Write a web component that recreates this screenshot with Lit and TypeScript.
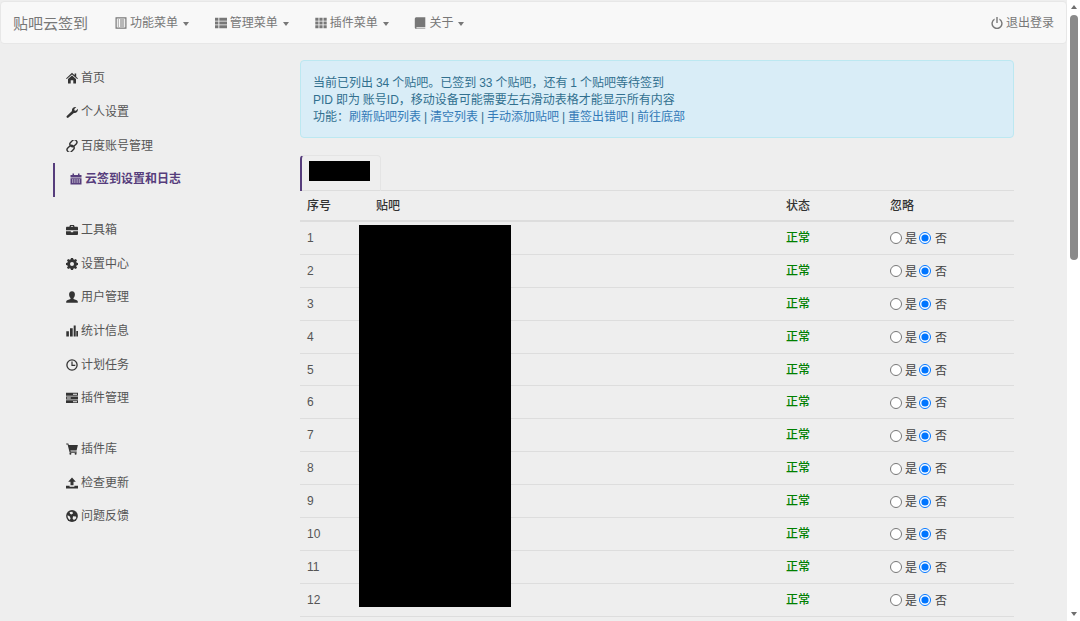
import { LitElement, html, css, svg } from "lit";
import { customElement } from "lit/decorators.js";

const ICONS: Record<string, unknown> = {
  home: svg`<path d="M6 .8 8.6 3.200V1.600h1.600v3.100L12 6.400l-.8.700L6 2.600.8 7.100 0 6.400z"/><path d="M6 3.600l4 3.500v4.300H7.300V8.200H4.700v3.200H2V7.100z"/>`,
  wrench: svg`<path d="M.8 10.100 6 4.900C5.500 2.800 7.400.4 10.300 1L8.300 3l.2 1.400 1.400.3 1.900-2c.6 2.900-1.700 4.900-3.900 4.300L2.500 11.600c-.5.4-1.200.4-1.600 0-.5-.4-.5-1.100-.1-1.500z"/>`,
  link: svg`<g fill="none" stroke="currentColor" stroke-width="1.400"><rect x="4.900" y="-.6" width="5" height="7.600" rx="2.300" transform="rotate(45 7.400 3.200)"/><rect x="2.100" y="5" width="5" height="7.600" rx="2.300" transform="rotate(45 4.600 8.800)"/></g>`,
  calendar: svg`<path d="M2.500.5h1.500V2H8V.5h1.500V2h2v2.500H.5V2h2zM.5 5.200h11v6.300H.5zM2 6.500v1h1.300v-1zM4.200 6.500v1h1.300v-1zM6.500 6.500v1h1.300v-1zM8.700 6.500v1H10v-1zM2 8.600v1h1.300v-1zM4.200 8.600v1h1.300v-1zM6.500 8.600v1h1.300v-1zM8.700 8.600v1H10v-1z" fill-rule="evenodd"/>`,
  briefcase: svg`<path d="M4 1h4l.6 1.800H11c.5 0 1 .5 1 1v2.400H0V3.800c0-.5.5-1 1-1h2.400zm.8 1.800h2.400L7 1.900H5z" fill-rule="evenodd"/><path d="M0 7.200h4.800v1h2.400v-1H12V10c0 .5-.5 1-1 1H1c-.5 0-1-.5-1-1z"/>`,
  cog: svg`<path fill-rule="evenodd" d="M5 .5h2l.3 1.500 1.100.5 1.300-.9 1.400 1.400-.9 1.300.5 1.100 1.500.3v2l-1.500.3-.5 1.100.9 1.300-1.400 1.400-1.300-.9-1.100.5-.3 1.500H5l-.3-1.500-1.100-.5-1.300.9L.9 10.400l.9-1.300-.5-1.100L-.2 7.700v-2l1.500-.3.5-1.100-.9-1.300L2.300 1.600l1.300.9 1.100-.5zM6 4.700a2 2 0 1 0 0 4 2 2 0 0 0 0-4z" transform="translate(0 -.7)"/>`,
  user: svg`<path d="M6 .3c2 0 3 1.500 2.900 3.400-.1 1.600-.7 2.700-1.400 3.200v1.200c1.600.5 4 1.100 4.300 2.300v1.300H.2v-1.300c.3-1.200 2.700-1.800 4.300-2.300V6.900c-.7-.5-1.300-1.600-1.400-3.200C3 1.800 4 .3 6 .3z"/>`,
  stats: svg`<path d="M.3 6.200h2.600v5.300H.3zM4 3.200h2.700v8.300H4zM7.700.5h2v11h-2zM10.300 6h1.700v5.500h-1.700z"/>`,
  time: svg`<circle cx="6" cy="6" r="5.100" fill="none" stroke="currentColor" stroke-width="1.300"/><path d="M5.400 2.600h1.200v3.200h2.700V7H5.400z"/>`,
  tasks: svg`<path d="M0 .8h12v2.900H0zM0 4.500h12v2.900H0zM0 8.200h12v2.900H0z"/><path d="M7 1.800h4v1H7zM.8 5.500h4v.9h-4zM7 9.200h4v1H7z" fill="#eee"/>`,
  cart: svg`<path d="M.2.400h2.100l.5 1.500h9.100L10.600 7.600H4.400l.3 1h6v1.100H3.700L1.600 1.500H.2z"/><circle cx="4.400" cy="10.800" r="1"/><circle cx="9.600" cy="10.800" r="1"/>`,
  open: svg`<path d="M6 .5l3.800 4.200H7.500v3.600h-3V4.700H2.200z"/><path d="M0 8.800h3.600v.9h4.800v-.9H12v2.700H0z"/>`,
  globe: svg`<circle cx="6" cy="6" r="5.900"/><path d="M3.600 1.900 6.400 1.700l.6 1.800-1.700 1-1.300-.7zM7 6.200l3 .2.300 1.900-2.300 1.800-1.400-1.400zM1.600 5.300l2.300 1.200.7 2.200-.9 1.200C2.300 9 1.300 7.300 1.600 5.300z" fill="#eee"/>`,
  listalt: svg`<path fill-rule="evenodd" d="M.5.300h11v11.400H.5zM1.700 1.500v9h8.600v-9z"/><path d="M2.800 2.600h1.200v1H2.800zM5 2.600h4.200v1H5zM2.800 4.600h1.200v1H2.800zM5 4.600h4.200v1H5zM2.800 6.500h1.200v1H2.800zM5 6.500h4.200v1H5zM2.800 8.400h1.200v1H2.800zM5 8.400h4.200v1H5z"/>`,
  thlist: svg`<path d="M0 .8h3.400v3H0zM4.300.8H12v3H4.300zM0 4.500h3.400v3H0zM4.300 4.500H12v3H4.300zM0 8.200h3.400v3H0zM4.300 8.200H12v3H4.300z"/>`,
  th: svg`<path d="M.3.800h3.200v3H.3zM4.400.8h3.200v3H4.400zM8.500.8h3.200v3H8.500zM.3 4.500h3.200v3H.3zM4.400 4.500h3.200v3H4.400zM8.500 4.500h3.200v3H8.500zM.3 8.200h3.200v3H.3zM4.400 8.200h3.200v3H4.400zM8.500 8.200h3.200v3H8.500z"/>`,
  book: svg`<path d="M2.500.2h8.800v10H3c-.6 0-.8.300-.8.700s.2.700.8.700h8.300v.4H2.500c-.9 0-1.700-.6-1.700-1.500V1.800C.8.900 1.600.2 2.500.2z"/>`,
  off: svg`<path d="M5.300.1h1.400v5.900H5.300z"/><path d="M3.600 1.500v1.600a4.200 4.200 0 1 0 4.800 0V1.500a5.600 5.600 0 1 1-4.800 0z"/>`,
};

const icon = (n: string) => html`<svg class="ic" viewBox="0 0 12 12" fill="currentColor" aria-hidden="true">${ICONS[n]}</svg>`;

const GROUPS: [string, string, boolean?][][] = [
  [["home", "首页"], ["wrench", "个人设置"], ["link", "百度账号管理"], ["calendar", "云签到设置和日志", true]],
  [["briefcase", "工具箱"], ["cog", "设置中心"], ["user", "用户管理"], ["stats", "统计信息"], ["time", "计划任务"], ["tasks", "插件管理"]],
  [["cart", "插件库"], ["open", "检查更新"], ["globe", "问题反馈"]],
];

const MENU: [string, string][] = [["listalt", "功能菜单"], ["thlist", "管理菜单"], ["th", "插件菜单"], ["book", "关于"]];

const LINE1 = "当前已列出 34 个贴吧。已签到 33 个贴吧\uFF0C还有 1 个贴吧等待签到";
const LINE2 = "PID 即为 账号ID\uFF0C移动设备可能需要左右滑动表格才能显示所有内容";
const LABEL = "功能\uFF1A";

@customElement("app-root")
export class AppRoot extends LitElement {
  static styles = css`
    :host {
      display: flex;
      height: 621px;
      overflow: hidden;
      background: #fff;
      font: 12px/17px "Liberation Sans", "Noto Sans CJK SC", sans-serif;
      color: #333;
    }
    .page { width: 1067px; height: 621px; background: #eee; overflow: hidden; flex: none; padding-top: 1px; box-sizing: border-box; }
    .ic { width: 12px; height: 12px; flex: none; }
    .navbar {
      height: 43px;
      box-sizing: border-box;
      display: flex;
      align-items: center;
      background: #f8f8f8;
      border: 1px solid #e7e7e7;
      border-radius: 4px;
      color: #777;
      padding: 2px 12px 0;
    }
    .brand { font-size: 15px; width: 102px; }
    .menu { display: flex; align-items: center; gap: 25.8px; flex: 1; }
    .menu-item, .logout { display: flex; align-items: center; gap: 3px; }
    .menu-item .ic, .logout .ic { margin-top: -2px; }
    .caret {
      width: 0; height: 0; margin-left: 2px; margin-top: 1px;
      border-left: 3.5px solid transparent;
      border-right: 3.5px solid transparent;
      border-top: 4px solid #777;
    }
    .content { display: flex; padding-top: 15px; }
    .side { width: 247px; margin-left: 53px; flex: none; padding-top: 3px; }
    .group { margin-bottom: 17px; }
    .nav-item {
      height: 33.67px;
      display: flex;
      align-items: center;
      gap: 3px;
      padding-left: 13px;
      box-sizing: border-box;
      color: #555;
    }
    .nav-item .ic { color: #333; margin-top: -1px; }
    .nav-item.active {
      border-left: 2px solid #563d7c;
      padding-left: 15px;
      color: #563d7c;
      font-weight: 700;
    }
    .nav-item.active .ic { color: #563d7c; }
    .main { width: 714px; flex: none; position: relative; }
    .alert {
      box-sizing: border-box;
      height: 78px;
      margin-top: 1px;
      padding: 14px 12px 0;
      background: #d9edf7;
      border: 1px solid #bce8f1;
      border-radius: 4px;
      color: #31708f;
      word-spacing: -0.4px;
    }
    .alert .l { color: #337ab7; }
    .tabs { margin-top: 17px; height: 36px; box-sizing: border-box; border-bottom: 1px solid #ddd; display: flex; }
    .tab {
      width: 81px; height: 36px; box-sizing: border-box;
      border: 1px solid #e4e4e4;
      border-left: 2px solid #563d7c;
      border-bottom: none;
      border-radius: 4px 4px 0 0;
      padding: 5px 0 0 7px;
    }
    .mask { background: #000; display: block; }
    .tab .mask { width: 61px; height: 20px; }
    .row {
      display: grid;
      grid-template-columns: 69px 410px 104px 1fr;
      height: 32.9px;
      box-sizing: border-box;
      border-bottom: 1px solid #ddd;
      align-items: center;
      padding: 1px 0 0 7px;
    }
    .row.head { height: 31px; border-bottom: 2px solid #ddd; font-weight: 500; padding-top: 2px; }
    .num { color: #555; }
    .ok { color: #008000; font-weight: 500; }
    .radios { display: flex; align-items: center; color: #444; }
    .radios input { margin: 0 3px 0 0; width: 12px; height: 12px; }
    .radios label { display: flex; align-items: center; margin-right: 2px; }
    .radios label + label input { margin-right: 4px; }
    .radios label span { padding-top: 2px; }
    .cover { position: absolute; left: 59px; top: 166px; width: 152px; height: 382px; background: #000; }
    .scrollbar {
      flex: 1;
      background: #fff;
      position: relative;
      display: flex;
      flex-direction: column;
      align-items: center;
      justify-content: space-between;
      padding: 5px 0;
    }
    .arrow-up { width: 0; height: 0; border: 3.5px solid transparent; border-top: 0; border-bottom: 4px solid #6e6e6e; }
    .arrow-down { width: 0; height: 0; border: 3.5px solid transparent; border-bottom: 0; border-top: 4px solid #6e6e6e; }
    .thumb { position: absolute; left: 3px; top: 15px; width: 8px; height: 245px; border-radius: 4px; background: #8a8a8a; }
  `;

  render() {
    const rows = Array.from({ length: 12 }, (_, i) => i + 1);
    return html`
      <div class="page">
        <div class="navbar">
          <div class="brand">贴吧云签到</div>
          <div class="menu">
            ${MENU.map(([i, t]) => html`<div class="menu-item">${icon(i)}<span>${t}</span><span class="caret"></span></div>`)}
          </div>
          <div class="logout">${icon("off")}<span>退出登录</span></div>
        </div>
        <div class="content">
          <div class="side">
            ${GROUPS.map((g) => html`<div class="group">
              ${g.map(([i, t, a]) => html`<div class="nav-item ${a ? "active" : ""}">${icon(i)}<span>${t}</span></div>`)}
            </div>`)}
          </div>
          <div class="main">
            <div class="alert">
              <div>${LINE1}</div>
              <div>${LINE2}</div>
              <div>${LABEL}<span class="l">刷新贴吧列表</span> | <span class="l">清空列表</span> | <span class="l">手动添加贴吧</span> | <span class="l">重签出错吧</span> | <span class="l">前往底部</span></div>
            </div>
            <div class="tabs"><div class="tab"><span class="mask"></span></div></div>
            <div class="row head"><span>序号</span><span>贴吧</span><span>状态</span><span>忽略</span></div>
            ${rows.map((n) => html`<div class="row">
              <span class="num">${n}</span><span></span><span class="ok">正常</span>
              <span class="radios">
                <label><input type="radio" name="r${n}" /><span>是</span></label>
                <label><input type="radio" name="r${n}" checked /><span>否</span></label>
              </span>
            </div>`)}
            <div class="cover"></div>
          </div>
        </div>
      </div>
      <div class="scrollbar">
        <span class="arrow-up"></span>
        <span class="thumb"></span>
        <span class="arrow-down"></span>
      </div>
    `;
  }
}
